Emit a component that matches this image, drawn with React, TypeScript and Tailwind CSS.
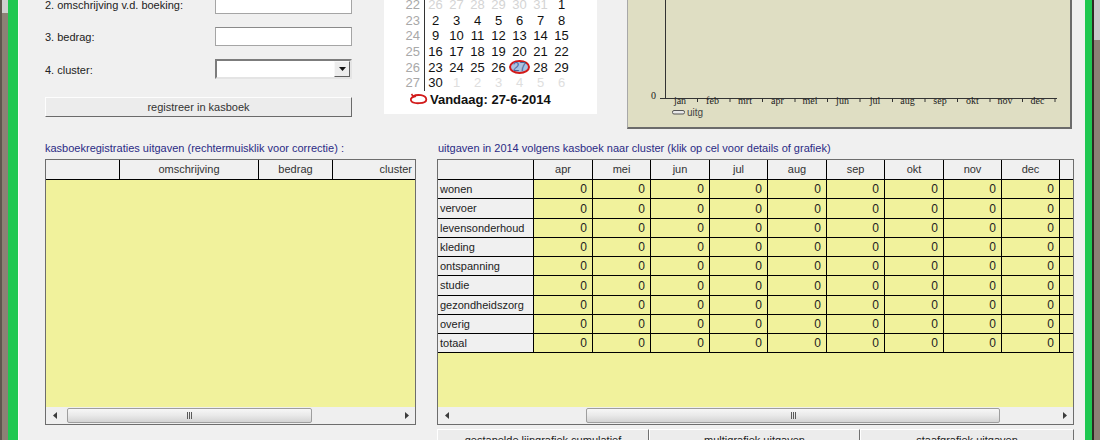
import React from "react";

const MONTH_W = [
  "w-[59px]",
  "w-[58px]",
  "w-[59px]",
  "w-[58px]",
  "w-[59px]",
  "w-[58px]",
  "w-[59px]",
  "w-[58px]",
  "w-[58px]",
];
const MONTHS = ["apr", "mei", "jun", "jul", "aug", "sep", "okt", "nov", "dec"];
const ROW_H = [
  "h-[19px]",
  "h-[20px]",
  "h-[19px]",
  "h-[19px]",
  "h-[19px]",
  "h-[20px]",
  "h-[19px]",
  "h-[19px]",
  "h-[19px]",
];
const CLUSTERS = [
  "wonen",
  "vervoer",
  "levensonderhoud",
  "kleding",
  "ontspanning",
  "studie",
  "gezondheidszorg",
  "overig",
  "totaal",
];

type Day = { n: number; fade?: "prev" | "next"; sel?: boolean };
const WEEKS: { wk: number; days: Day[] }[] = [
  {
    wk: 22,
    days: [
      { n: 26, fade: "prev" },
      { n: 27, fade: "prev" },
      { n: 28, fade: "prev" },
      { n: 29, fade: "prev" },
      { n: 30, fade: "prev" },
      { n: 31, fade: "prev" },
      { n: 1 },
    ],
  },
  { wk: 23, days: [2, 3, 4, 5, 6, 7, 8].map((n) => ({ n })) },
  { wk: 24, days: [9, 10, 11, 12, 13, 14, 15].map((n) => ({ n })) },
  { wk: 25, days: [16, 17, 18, 19, 20, 21, 22].map((n) => ({ n })) },
  {
    wk: 26,
    days: [
      { n: 23 },
      { n: 24 },
      { n: 25 },
      { n: 26 },
      { n: 27, sel: true },
      { n: 28 },
      { n: 29 },
    ],
  },
  {
    wk: 27,
    days: [
      { n: 30 },
      { n: 1, fade: "next" },
      { n: 2, fade: "next" },
      { n: 3, fade: "next" },
      { n: 4, fade: "next" },
      { n: 5, fade: "next" },
      { n: 6, fade: "next" },
    ],
  },
];

function Arrow({ dir }: { dir: "l" | "r" }) {
  return (
    <div className="flex h-full w-[17px] shrink-0 items-center justify-center">
      <svg width="4" height="7" viewBox="0 0 4 7">
        {dir === "l" ? (
          <polygon points="4,0 0,3.5 4,7" fill="#3c3c3c" />
        ) : (
          <polygon points="0,0 4,3.5 0,7" fill="#3c3c3c" />
        )}
      </svg>
    </div>
  );
}

function ScrollBar({ thumb }: { thumb: string }) {
  return (
    <div className="flex h-[17px] shrink-0 items-center bg-[#efefef]">
      <Arrow dir="l" />
      <div
        className={`flex h-[15px] items-center justify-center rounded-[2px] border border-[#9e9e9e] bg-linear-to-b from-[#f7f7f7] via-[#e9e9e9] to-[#d4d4d4] ${thumb}`}
      >
        <div className="flex gap-[1px]">
          <div className="h-[7px] w-[1px] bg-[#5a5a5a]" />
          <div className="h-[7px] w-[1px] bg-[#5a5a5a]" />
          <div className="h-[7px] w-[1px] bg-[#5a5a5a]" />
        </div>
      </div>
      <div className="flex-1" />
      <Arrow dir="r" />
    </div>
  );
}

function TextBox() {
  return (
    <div className="h-[19px] w-[137px] border border-[#a5a5a5] border-t-[#8a8a8a] bg-white" />
  );
}

function Calendar() {
  return (
    <div className="ml-[32px] h-[114px] w-[213px] shrink-0 overflow-hidden bg-white font-['Liberation_Sans',Arial,sans-serif] text-[13px] text-[#111]">
      <div className="mt-[-2.8px] flex flex-col">
        {WEEKS.map((w) => (
          <div key={w.wk} className="flex h-[15.6px] items-center leading-[15.6px]">
            <div className="h-full w-[41px] shrink-0 border-r border-[#333] pr-[4px] text-right text-[#a8a8a8]">
              {w.wk}
            </div>
            {w.days.map((d, i) => (
              <div
                key={i}
                className={`flex h-full w-[21px] shrink-0 items-center justify-center ${
                  d.fade === "prev"
                    ? "text-[#d4d4d4]"
                    : d.fade === "next"
                    ? "text-[#dedede]"
                    : ""
                }`}
              >
                {d.sel ? (
                  <span className="flex h-[14px] w-[21px] items-center justify-center rounded-[50%] border-2 border-[#d21a1a] bg-[#a9c3e2] text-[12px] text-[#48679a]">
                    {d.n}
                  </span>
                ) : (
                  d.n
                )}
              </div>
            ))}
          </div>
        ))}
        <div className="mt-[1px] flex h-[16px] items-center pl-[25px]">
          <svg width="19" height="13" viewBox="0 0 19 13">
            <path
              d="M4 3.2 C 8 1.2, 17 1.5, 17.3 6.5 C 17.5 11, 3.5 11.5, 2 7.5 C 1.2 5.3, 3 3.8, 7 3"
              fill="none"
              stroke="#d21a1a"
              strokeWidth="1.8"
            />
            <path d="M4 3.2 L 2.5 1" fill="none" stroke="#d21a1a" strokeWidth="1.6" />
          </svg>
          <span className="ml-[2px] font-bold text-[#111]">Vandaag: 27-6-2014</span>
        </div>
      </div>
    </div>
  );
}

function Chart() {
  const months = ["jan", "feb", "mrt", "apr", "mei", "jun", "jul", "aug", "sep", "okt", "nov", "dec"];
  return (
    <div className="ml-[30px] h-[129px] w-[445px] shrink-0 border-b-2 border-l border-r-2 border-[#6b6b6b] border-l-[#a8a8a8] bg-[#dfdec3]">
      <svg width="442" height="127" viewBox="0 0 442 127">
        <line x1="37.5" y1="0" x2="37.5" y2="98" stroke="#333" strokeWidth="1" />
        <line x1="32" y1="98.5" x2="429" y2="98.5" stroke="#333" strokeWidth="1" />
        <text x="28" y="99" textAnchor="end" fontSize="10" fontFamily="Liberation Serif, serif" fill="#222">
          0
        </text>
        {months.map((m, i) => (
          <text
            key={m}
            x={52 + i * 32.5}
            y="104"
            textAnchor="middle"
            fontSize="10"
            fontFamily="Liberation Serif, serif"
            fill="#222"
          >
            {m}
          </text>
        ))}
        {months.map((m, i) => (
          <line
            key={"t" + m}
            x1={69.5 + i * 32.5}
            y1="98"
            x2={69.5 + i * 32.5}
            y2="102"
            stroke="#333"
            strokeWidth="1"
          />
        ))}
        <rect x="44.5" y="110.5" width="12" height="3.5" rx="1.5" fill="#e8e8e8" stroke="#555" strokeWidth="1" />
        <text x="59" y="116" fontSize="10" fontFamily="Liberation Sans, sans-serif" fill="#444">
          uitg
        </text>
      </svg>
    </div>
  );
}

function LeftGrid() {
  return (
    <div className="w-[371px] shrink-0">
      <div className="h-[13px] leading-[13px] text-[#2b2b85]">
        kasboekregistraties uitgaven (rechtermuisklik voor correctie) :
      </div>
      <div className="mt-[4px] flex h-[266px] flex-col border border-[#6d6d6d]">
        <div className="flex h-[20px] shrink-0 border-b border-black bg-[#f0f0f0] leading-[19px] text-[#333]">
          <div className="w-[74px] shrink-0 border-r border-black" />
          <div className="w-[139px] shrink-0 border-r border-black text-center">omschrijving</div>
          <div className="w-[74px] shrink-0 border-r border-black text-center">bedrag</div>
          <div className="flex-1 pr-[3px] text-right">cluster</div>
        </div>
        <div className="flex-1 bg-[#f1f29c]" />
        <ScrollBar thumb="ml-[4px] w-[245px]" />
      </div>
    </div>
  );
}

function RightGrid() {
  return (
    <div className="ml-[21px] w-[637px] shrink-0">
      <div className="h-[13px] pl-[1px] leading-[13px] text-[#2b2b85]">
        uitgaven in 2014 volgens kasboek naar cluster (klik op cel voor details of grafiek)
      </div>
      <div className="mt-[4px] flex h-[266px] flex-col border border-[#6d6d6d]">
        <div className="flex h-[20px] shrink-0 border-b border-black bg-[#f0f0f0] leading-[19px] text-[#333]">
          <div className="w-[96px] shrink-0 border-r border-black" />
          {MONTHS.map((m, i) => (
            <div key={m} className={`${MONTH_W[i]} shrink-0 border-r border-black text-center`}>
              {m}
            </div>
          ))}
          <div className="flex-1" />
        </div>
        {CLUSTERS.map((c, r) => (
          <div key={c} className={`flex ${ROW_H[r]} shrink-0 border-b border-black`}>
            <div className="flex w-[96px] shrink-0 items-center border-r border-black bg-[#f0f0f0] pl-[2px] text-[#222]">
              {c}
            </div>
            {MONTHS.map((m, i) => (
              <div
                key={m}
                className={`flex ${MONTH_W[i]} shrink-0 items-center justify-end border-r border-black bg-[#f1f29c] pr-[5px] text-[12px] text-[#222]`}
              >
                0
              </div>
            ))}
            <div className="flex-1 bg-[#f1f29c]" />
          </div>
        ))}
        <div className="flex-1 bg-[#f1f29c]" />
        <ScrollBar thumb="ml-[131px] w-[414px]" />
      </div>
      <div className="mt-[4px] flex text-[#222]">
        <div className="flex h-[23px] w-[212px] items-center justify-center border border-b-[#707070] border-l-white border-r-[#707070] border-t-white bg-[#ececec]">
          gestapelde lijngrafiek cumulatief
        </div>
        <div className="flex h-[23px] w-[211px] items-center justify-center border border-b-[#707070] border-l-white border-r-[#707070] border-t-white bg-[#ececec]">
          multigrafiek uitgaven
        </div>
        <div className="flex h-[23px] w-[214px] items-center justify-center border border-b-[#707070] border-l-white border-r-[#707070] border-t-white bg-[#ececec]">
          staafgrafiek uitgaven
        </div>
      </div>
    </div>
  );
}

export default function App() {
  return (
    <div className="flex h-[440px] w-[1100px] overflow-hidden bg-[#f0f0f0] font-['Liberation_Sans',Arial,sans-serif] text-[11px] text-[#222]">
      <div className="flex w-[8px] shrink-0 flex-col border-l-2 border-[#5e574e]">
        <div className="h-[13px] bg-[#cfcfcf]" />
        <div className="flex-1 bg-[#8c8175]" />
      </div>
      <div className="w-[10px] shrink-0 bg-[#1fc851]" />
      <div className="w-[1067px] shrink-0 border-l border-[#fafafa] pl-[26px]">
        <div className="flex h-[129px] items-start">
          <div className="mt-[-5px] flex w-[307px] shrink-0 flex-col">
            <div className="flex h-[19px] items-center justify-between">
              <span className="pt-[2px]">2. omschrijving v.d. boeking:</span>
              <TextBox />
            </div>
            <div className="mt-[13px] flex h-[19px] items-center justify-between">
              <span className="pt-[2px]">3. bedrag:</span>
              <TextBox />
            </div>
            <div className="mt-[13px] flex h-[20px] items-center justify-between">
              <span className="pt-[2px]">4. cluster:</span>
              <div className="flex h-[20px] w-[137px] items-stretch justify-end border-2 border-b-[#e4e4e4] border-l-[#7c7c7c] border-r-[#e4e4e4] border-t-[#7c7c7c] bg-white">
                <div className="flex w-[16px] items-center justify-center border border-b-[#606060] border-l-[#f8f8f8] border-r-[#606060] border-t-[#f8f8f8] bg-[#ededed]">
                  <svg width="7" height="4" viewBox="0 0 7 4">
                    <polygon points="0,0 7,0 3.5,4" fill="#111" />
                  </svg>
                </div>
              </div>
            </div>
            <div className="mt-[18px] flex h-[20px] items-center justify-center border border-b-[#6a6a6a] border-l-[#fdfdfd] border-r-[#6a6a6a] border-t-[#fdfdfd] bg-[#ececec] text-[#333]">
              registreer in kasboek
            </div>
          </div>
          <Calendar />
          <Chart />
        </div>
        <div className="mt-[13px] flex items-start">
          <LeftGrid />
          <RightGrid />
        </div>
      </div>
      <div className="w-[7px] shrink-0 bg-[#1fc851]" />
      <div className="flex w-[8px] shrink-0 flex-col border-l-2 border-[#2f2a25]">
        <div className="h-[40px] bg-[#c9c9c9]" />
        <div className="flex-1 bg-[#8c8175]" />
      </div>
    </div>
  );
}
